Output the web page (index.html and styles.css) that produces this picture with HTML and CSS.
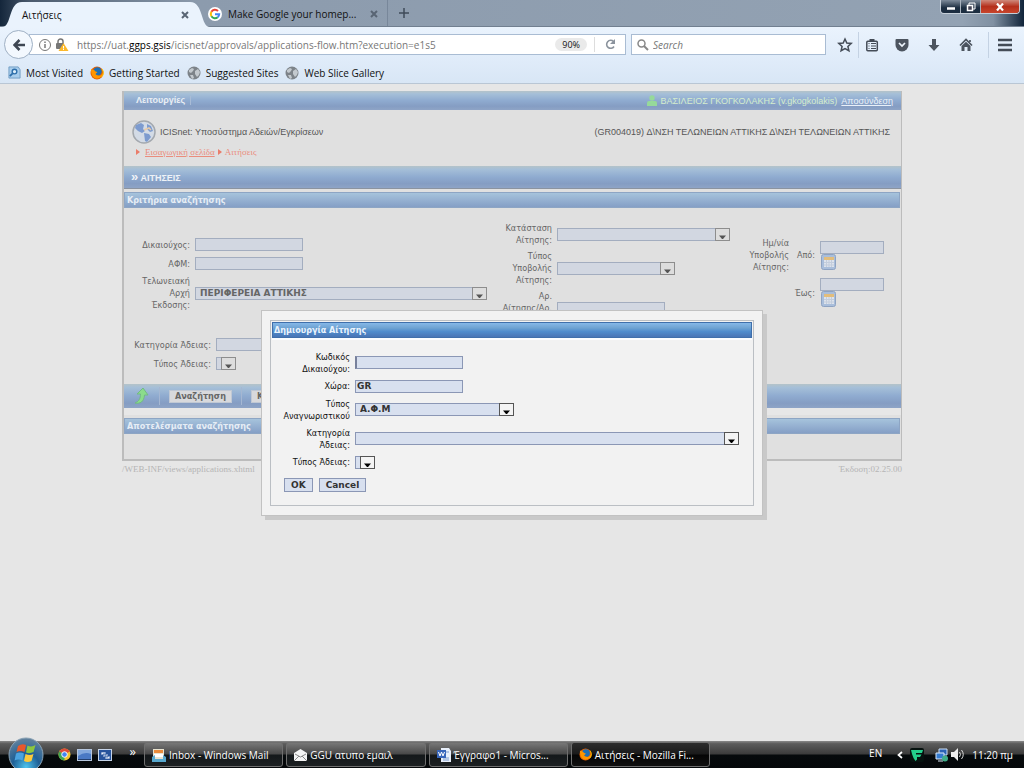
FILE: index.html
```html
<!DOCTYPE html>
<html lang="el">
<head>
<meta charset="utf-8">
<title>Αιτήσεις</title>
<link rel="stylesheet" href="styles.css">
</head>
<body>
<svg class="defs" width="0" height="0" aria-hidden="true">
  <symbol id="close" viewBox="0 0 10 10"><path d="M2 2l6 6M8 2L2 8" stroke="#596574" stroke-width="2"/></symbol>
  <symbol id="firefox" viewBox="0 0 14 14"><circle cx="7" cy="7" r="6.5" fill="#e66000"/><circle cx="7.5" cy="5.5" r="4.2" fill="#1f6fb5"/><path d="M1 3c0 7 3 10 7 9.500 3-.5 5-3 5.300-6C12 9 10 10 8 9.500 5.500 9 5 7.500 6.500 7 8 6.500 7 5.500 5.500 5.500 4.500 4 3.500 3.500 1 3z" fill="#ff9500"/><path d="M12 3c2 3 1.500 6-.5 8" stroke="#ffcb00" fill="none"/></symbol>
  <symbol id="globe" viewBox="0 0 14 14"><circle cx="7" cy="7" r="6.500" fill="#7d8389"/><path d="M2 4l3-2 2 1-1 2-2 2-2-1zM8 5l3-2 2 3-1 3-2 2-2-3zM3 9l3 0 1 3-2 1z" fill="#c3c9ce"/></symbol>
  <symbol id="calendar" viewBox="0 0 15 16"><rect x=".5" y=".5" width="14" height="15" rx="2" fill="#a9bedb" stroke="#8ea3c2"/><rect x="3" y="3" width="10" height="10" fill="#dde3ec"/><path d="M3 4.500h10" stroke="#e2bd7c" stroke-width="3"/><path d="M3 8.500h10M3 11h10M5.500 6v7M8 6v7M10.500 6v7" stroke="#c3cddc"/></symbol>
  <symbol id="arrow" viewBox="0 0 15 13"><rect x=".5" y=".5" width="14" height="12" fill="var(--box)" stroke="var(--edge)"/><path d="M4 7.500h7L8 11H7z" fill="var(--tip)"/></symbol>
</svg>
<header class="browser">
  <div class="tabs">
    <div class="tab tab-on">
      <svg class="curve" width="20" height="26" viewBox="0 0 20 26"><path d="M0 26C10 26 6 1 20 1v25z" fill="#eaf3fd"/></svg>
      <div class="tab-body"><span>Αιτήσεις</span><button class="plain" aria-label="Κλείσιμο"><svg width="10" height="10"><use href="#close"/></svg></button></div>
      <svg class="curve" width="20" height="26" viewBox="0 0 20 26"><path d="M20 26C10 26 14 1 0 1v25z" fill="#eaf3fd"/></svg>
    </div>
    <div class="tab tab-off">
      <svg width="14" height="14" viewBox="0 0 14 14"><circle cx="7" cy="7" r="7" fill="#fff"/><g fill="none" stroke-width="2"><path d="M10 4A4.200 4.200 0 0 0 3.400 4.800" stroke="#ea4335"/><path d="M3.400 4.800a4.200 4.200 0 0 0 0 4.400" stroke="#fbbc05"/><path d="M3.400 9.200A4.200 4.200 0 0 0 9.700 10.200" stroke="#34a853"/><path d="M9.700 10.200A4.200 4.200 0 0 0 11.200 7.200H7" stroke="#4285f4"/></g></svg>
      <span>Make Google your homep...</span><button class="plain" aria-label="Κλείσιμο"><svg width="10" height="10"><use href="#close"/></svg></button>
    </div>
    <button class="plain new-tab" aria-label="Νέα καρτέλα"><svg width="10" height="10" viewBox="0 0 10 10"><path d="M5 0v10M0 5h10" stroke="#3f4b5a" stroke-width="1.500"/></svg></button>
    <div class="win">
      <button aria-label="Ελαχιστοποίηση"><svg width="10" height="8" viewBox="0 0 10 8"><path d="M1 5.500h8" stroke="#fff" stroke-width="2.500"/></svg></button>
      <button aria-label="Επαναφορά"><svg width="10" height="10" viewBox="0 0 10 10"><path d="M3 3V1h6v6H7" fill="none" stroke="#fff"/><path d="M1.500 3.500h5v5h-5z" fill="#445" stroke="#fff" stroke-width="1.500"/></svg></button>
      <button class="win-close" aria-label="Κλείσιμο"><svg width="10" height="8" viewBox="0 0 10 8"><path d="M2 .5l6 7M8 .5l-6 7" stroke="#fff" stroke-width="2.200"/></svg></button>
    </div>
  </div>
  <div class="nav">
    <button class="plain back" aria-label="Πίσω"><svg width="12" height="12" viewBox="0 0 12 12"><path d="M6.500 1L1.500 6l5 5M2 6h10" fill="none" stroke="#3f4753" stroke-width="2.600"/></svg></button>
    <div class="url">
      <svg width="12" height="12" viewBox="0 0 12 12"><circle cx="6" cy="6" r="5.500" fill="none" stroke="#777"/><path d="M6 5v4M6 2.500V4" stroke="#666" stroke-width="1.300"/></svg>
      <svg width="14" height="13" viewBox="0 0 14 13"><path d="M3 6V3.500a2.500 2.500 0 0 1 5 0V6" fill="none" stroke="#777" stroke-width="1.500"/><rect x="1" y="5" width="8" height="6" rx="1" fill="#777"/><path d="M8.500 5l5 8h-10z" fill="#fcb92c"/><path d="M8.500 8v2.500M8.500 11v1" stroke="#fff"/></svg>
      <span class="address">https://uat.<b>ggps.gsis</b>/icisnet/approvals/applications-flow.htm?execution=e1s5</span>
      <span class="zoom">90%</span>
      <button class="plain reload" aria-label="Ανανέωση"><svg width="11" height="11" viewBox="0 0 11 11"><path d="M8.500 2.500A4 4 0 1 0 9 7.500" fill="none" stroke="#8b939d" stroke-width="1.600"/><path d="M10 0v5H5z" fill="#8b939d"/></svg></button>
    </div>
    <label class="search"><svg width="12" height="12" viewBox="0 0 12 12"><circle cx="4.500" cy="4.500" r="3.500" fill="none" stroke="#888" stroke-width="1.500"/><path d="M7 7l4 4" stroke="#888" stroke-width="2"/></svg><input type="text" placeholder="Search" aria-label="Search"></label>
    <div class="tools">
      <button class="plain" aria-label="Σελιδοδείκτης"><svg width="16" height="16" viewBox="0 0 16 16"><path d="M8 2l1.800 4 4.400.4-3.300 3 1 4.300L8 11.500l-3.900 2.200 1-4.300-3.300-3L6.200 6z" fill="none" stroke="#444c57" stroke-width="1.500"/></svg></button>
      <button class="plain ruled" aria-label="Σελιδοδείκτες"><svg width="16" height="16" viewBox="0 0 16 16"><rect x="2.800" y="4.300" width="10.500" height="9.500" rx="1" fill="none" stroke="#444c57" stroke-width="1.500"/><path d="M5.500 4V2h5v2z" fill="#444c57"/><path d="M4.500 6.500h1m1.500 0h5M4.500 9h1M7 9h5m-7.500 2.500h1m1.500 0h5" stroke="#444c57"/></svg></button>
      <button class="plain" aria-label="Pocket"><svg width="16" height="16" viewBox="0 0 16 16"><path d="M1.500 3q0-1 1-1h11q1 0 1 1v5a6.500 6.500 0 0 1-13 0z" fill="#4c545f"/><path d="M5 6l3 3 3-3" fill="none" stroke="#eef5fd" stroke-width="1.700"/></svg></button>
      <button class="plain" aria-label="Λήψεις"><svg width="16" height="16" viewBox="0 0 16 16"><path d="M6 2h4v6h3.500L8 14 2.500 8H6z" fill="#4c545f"/></svg></button>
      <button class="plain" aria-label="Αρχική"><svg width="16" height="16" viewBox="0 0 16 16"><path d="M2 8.500l6-6 6 6M12 5V3" fill="none" stroke="#4c545f" stroke-width="1.700"/><path d="M3.500 9L8 4.700 12.500 9v5H9.500v-4h-3v4h-3z" fill="#4c545f"/></svg></button>
      <button class="plain ruled menu" aria-label="Μενού"><svg width="14" height="14" viewBox="0 0 14 14"><path d="M0 2h14M0 7h14M0 12h14" stroke="#444c57" stroke-width="2.500"/></svg></button>
    </div>
  </div>
  <nav class="bookmarks">
    <a href="#"><svg width="13" height="13" viewBox="0 0 14 14"><path d="M1 1h10l2 3v9H1z" fill="#a8cdec" stroke="#6f9cc3"/><circle cx="7" cy="6" r="2.500" fill="#dceefa" stroke="#2d6eaa" stroke-width="1.500"/><path d="M5 8l-3 3" stroke="#2d6eaa" stroke-width="2"/></svg>Most Visited</a>
    <a href="#"><svg width="14" height="14"><use href="#firefox"/></svg>Getting Started</a>
    <a href="#"><svg width="14" height="14"><use href="#globe"/></svg>Suggested Sites</a>
    <a href="#"><svg width="14" height="14"><use href="#globe"/></svg>Web Slice Gallery</a>
  </nav>
</header>

<main class="view">
  <div class="app">
    <div class="frame">
      <div class="topbar"><span class="ops">Λειτουργίες</span>
        <span class="user"><svg width="10" height="11" viewBox="0 0 10 11"><circle cx="5" cy="3" r="2.700" fill="#96d99a"/><path d="M0 11V8q0-2 2-2h6q2 0 2 2v3z" fill="#96d99a"/></svg>ΒΑΣΙΛΕΙΟΣ ΓΚΟΓΚΟΛΑΚΗΣ (v.gkogkolakis) <a href="#">Αποσύνδεση</a></span></div>
      <div class="head">
        <div class="head-row">
          <svg width="24" height="24" viewBox="0 0 24 24"><circle cx="12" cy="12" r="11" fill="#d3dbe6" stroke="#a3a8ae" stroke-width="1.500"/><path d="M4 5l5-2 3 2-1 4 2 2-3 2-4-2-3-3zM12 13l5 1 2 3-4 5-2-1zM15 4l4 2 2 5-3 1-3-3z" fill="#7d9bcf"/><path d="M12 10l5-2 2 2" stroke="#e6c9a8" stroke-width="1.500" fill="none"/></svg>
          <span>ICISnet: Υποσύστημα Αδειών/Εγκρίσεων</span>
          <span class="office">(GR004019) Δ\ΝΣΗ ΤΕΛΩΝΕΙΩΝ ΑΤΤΙΚΗΣ Δ\ΝΣΗ ΤΕΛΩΝΕΙΩΝ ΑΤΤΙΚΗΣ</span>
        </div>
        <div class="crumbs"><i></i><a href="#">Εισαγωγική σελίδα</a><i></i><span>Αιτήσεις</span></div>
      </div>
      <h1 class="title"><span>»</span> ΑΙΤΗΣΕΙΣ</h1>
      <h2 class="bar">Κριτήρια αναζήτησης</h2>
      <form class="criteria">
        <div class="cols">
          <div class="col col-a">
            <div class="row"><label for="own">Δικαιούχος:</label><input id="own" type="text"></div>
            <div class="row"><label for="afm">ΑΦΜ:</label><input id="afm" type="text"></div>
            <div class="row tall"><label for="auth">Τελωνειακή Αρχή Έκδοσης:</label><span class="pick w-auth"><select id="auth"><option>ΠΕΡΙΦΕΡΕΙΑ ΑΤΤΙΚΗΣ</option></select><svg><use href="#arrow"/></svg></span></div>
          </div>
          <div class="col col-b">
            <div class="row"><label for="st">Κατάσταση Αίτησης:</label><span class="pick w-state"><select id="st"><option></option></select><svg><use href="#arrow"/></svg></span></div>
            <div class="row"><label for="sub">Τύπος Υποβολής Αίτησης:</label><span class="pick w-sub"><select id="sub"><option></option></select><svg><use href="#arrow"/></svg></span></div>
            <div class="row"><label for="num">Αρ.<br>Αίτησης/Αρ.<br>Άδειας:</label><input id="num" type="text"></div>
          </div>
          <div class="col-c">
            <span class="lab">Ημ/νία Υποβολής Αίτησης:</span>
            <label for="from">Από:</label>
            <div class="date"><input id="from" type="text"><button type="button" class="plain" aria-label="Ημερολόγιο από"><svg width="15" height="16"><use href="#calendar"/></svg></button></div>
            <label for="to" class="to">Έως:</label>
            <div class="date"><input id="to" type="text"><button type="button" class="plain" aria-label="Ημερολόγιο έως"><svg width="15" height="16"><use href="#calendar"/></svg></button></div>
          </div>
        </div>
        <div class="licence">
          <div class="row"><label for="cat">Κατηγορία Άδειας:</label><span class="pick w-cat"><select id="cat"><option></option></select><svg><use href="#arrow"/></svg></span></div>
          <div class="row"><label for="typ">Τύπος Άδειας:</label><span class="pick w-type"><select id="typ"><option></option></select><svg><use href="#arrow"/></svg></span></div>
        </div>
      </form>
      <div class="actions">
        <svg width="16" height="18" viewBox="0 0 16 18"><path d="M1 16c5 1 9-1 9.500-8H14L9 1 3 7h3.500c0 4-1 7-5.500 9z" fill="#8bdc8b" stroke="#72b985"/></svg>
        <span class="sep"></span><button>Αναζήτηση</button><span class="sep"></span><button>Καθαρισμός</button>
      </div>
      <div class="results"><h2 class="bar">Αποτελέσματα αναζήτησης</h2></div>
    </div>
    <footer><span>/WEB-INF/views/applications.xhtml</span><span>Έκδοση:02.25.00</span></footer>
  </div>

  <div class="overlay">
    <div class="dialog" role="dialog" aria-labelledby="dlg">
      <form class="inner">
        <h2 class="dlg-title" id="dlg">Δημιουργία Αίτησης</h2>
        <div class="fields">
          <div class="row"><label for="code">Κωδικός Δικαιούχου:</label><span class="focus"><input id="code" type="text"></span></div>
          <div class="row"><label for="country">Χώρα:</label><input id="country" type="text" value="GR"></div>
          <div class="row"><label for="idt">Τύπος Αναγνωριστικού</label><span class="pick w-id"><select id="idt"><option>Α.Φ.Μ</option></select><svg><use href="#arrow"/></svg></span></div>
          <div class="row"><label for="dcat">Κατηγορία Άδειας:</label><span class="pick w-cat"><select id="dcat"><option></option></select><svg><use href="#arrow"/></svg></span></div>
          <div class="row"><label for="dtyp">Τύπος Άδειας:</label><span class="pick w-type"><select id="dtyp"><option></option></select><svg><use href="#arrow"/></svg></span></div>
          <div class="buttons"><button type="button">OK</button><button type="button">Cancel</button></div>
        </div>
      </form>
    </div>
  </div>
</main>

<footer class="taskbar">
  <button class="plain orb" aria-label="Έναρξη"><svg width="36" height="36" viewBox="0 0 36 36"><defs><radialGradient id="g" cx=".5" cy=".85" r=".8"><stop offset="0" stop-color="#4fc4ee"/><stop offset=".5" stop-color="#1f5f95"/><stop offset="1" stop-color="#5e7f9c"/></radialGradient></defs><circle cx="18" cy="18" r="17" fill="url(#g)" stroke="#8ba3b5"/><path d="M10 9q4-3 8-1l-1.500 7q-4-2-8 0z" fill="#e8582b"/><path d="M19.500 8.500q4 2 8-.5l-2 7q-4 2-7.500.5z" fill="#8cc63f"/><path d="M8 16.500q4-2 8 0l-1.500 7q-4-2-8 0z" fill="#4aa3e0"/><path d="M17.500 17q4 2 8 0l-2 7q-4 2-7.500 0z" fill="#fdc93a"/></svg></button>
  <div class="quick">
    <svg width="13" height="13" viewBox="0 0 14 14"><circle cx="7" cy="7" r="6.500" fill="#f1c232"/><path d="M7 7L1.400 3.800A6.500 6.500 0 0 1 12.600 3.800z" fill="#dd4b39"/><path d="M7 7L1.400 3.800A6.500 6.500 0 0 0 7 13.500z" fill="#3fa653"/><circle cx="7" cy="7" r="3" fill="#4285f4" stroke="#fff"/></svg>
    <svg width="15" height="12" viewBox="0 0 15 12"><rect x=".5" y=".5" width="14" height="11" fill="#4a79c4" stroke="#b6c6dd"/><path d="M1 7q7-5 13-2V1H1z" fill="#83a8dc"/><path d="M1 10.500h13" stroke="#24406f"/></svg>
    <svg width="14" height="12" viewBox="0 0 14 12"><rect x=".5" y=".5" width="13" height="11" fill="#27549c" stroke="#c6d4e8"/><path d="M3 3h5v3H3zM5 5h5v3H5zM7 7h5v3H7z" fill="#e8effa" stroke="#27549c" stroke-width=".7"/></svg>
    <span class="more">»</span>
  </div>
  <div class="tasks">
    <button><svg width="14" height="14" viewBox="0 0 14 14"><rect x="1" y="1" width="11" height="12" fill="#e9e3cf"/><path d="M2 2h9v3H2z" fill="#e98b3c"/><path d="M2 6h9v3H2z" fill="#fff"/><path d="M0 9l3-2v4h8V7l3 2v5H0z" fill="#58a9cf"/></svg><span>Inbox - Windows Mail</span></button>
    <button><svg width="13" height="12" viewBox="0 0 13 12"><path d="M0 4l6.500-4L13 4v8H0z" fill="#f4f4f4"/><path d="M1 5l5.500 3L12 5M0 12l5-5M13 12L8 7" fill="none" stroke="#888"/></svg><span>GGU ατυπο εμαιλ</span></button>
    <button><svg width="14" height="14" viewBox="0 0 14 14"><path d="M4 0h8l2 3v11H4z" fill="#e8effa"/><path d="M6 4h6M6 10h6M6 12h6" stroke="#7d9ccd"/><rect y="2" width="9" height="8" fill="#3765ba"/><path d="M1.500 4l1.500 4 1.500-4L6 8l1.500-4" fill="none" stroke="#fff"/></svg><span>Έγγραφο1 - Micros...</span></button>
    <button class="on"><svg width="13" height="13"><use href="#firefox"/></svg><span>Αιτήσεις - Mozilla Fi...</span></button>
  </div>
  <div class="tray"><span class="lang">EN</span>
    <svg width="6" height="8" viewBox="0 0 6 8"><path d="M5 1L1.500 4 5 7" fill="none" stroke="#fff" stroke-width="1.700"/></svg>
    <svg width="14" height="14" viewBox="0 0 14 14"><rect width="14" height="14" rx="2" fill="#06120f"/><path d="M1 2h12l-1 3H6v1.500h5.500L10 9H7v2.500L5.500 13 3.500 10 2 6z" fill="#24cf8c"/></svg>
    <svg class="net" width="13" height="14" viewBox="0 0 13 14"><path d="M4 1h8v6H4z" fill="#2b62b4" stroke="#cfe0f5"/><path d="M1 5h8v6H1zM3 13h5" fill="#347bd0" stroke="#dce9f8"/><circle cx="10" cy="10.500" r="3" fill="#3fae8a"/></svg>
    <svg width="14" height="13" viewBox="0 0 14 13"><path d="M0 4h3l4-4v13L3 9H0z" fill="#eee"/><path d="M8.500 4q2 2.500 0 5M10.500 2q3.500 4.500 0 9" fill="none" stroke="#ddd"/></svg>
    <time>11:20 πμ</time></div>
</footer>
</body>
</html>
```
FILE: styles.css
```css
* { box-sizing: border-box; }
body { margin: 0; height: 100vh; display: flex; flex-direction: column; overflow: hidden; background: #e6e6e6; font: 10px/14px "Open Sans", "Noto Sans", sans-serif; color: #111; }
.defs { position: absolute; }
svg { display: block; flex: none; }
button, input, select { font: inherit; color: inherit; margin: 0; padding: 0; }
.plain { border: 0; background: none; display: flex; align-items: center; justify-content: center; }
h1, h2 { margin: 0; }

/* Browser chrome */
.tabs { display: flex; height: 27px; background: linear-gradient(90deg, #14263b, #4b5b6e 30px, #8c9bad 200px, #93a2b3 94%, #8090a2 97%, #10243a); border-bottom: 1px solid #717f90; }
.tab { display: flex; align-items: center; }
.tab-on { margin-left: 2px; height: 27px; }
.tab-body { width: 168px; height: 25px; align-self: flex-end; background: #eaf3fd; display: flex; align-items: center; justify-content: space-between; padding: 0; }
.tab-body > * { z-index: 1; }
.curve { align-self: flex-end; height: 26px; }
.tab-off { gap: 6px; width: 180px; height: 26px; padding: 2px 8px 0 0; margin-left: -2px; border-right: 1px solid #78879a; }
.tab-off span { flex: 1; white-space: nowrap; }
.new-tab { width: 32px; }
.win { margin-left: auto; margin-right: 4px; display: flex; height: 14px; border: 1px solid #c5ced8; border-top: 0; border-radius: 0 0 4px 4px; overflow: hidden; }
.win button { width: 20px; border: 0; border-right: 1px solid #a9b3be; background: linear-gradient(#7f8c9b, #1c2d40 60%); display: flex; align-items: center; justify-content: center; }
.win .win-close { width: 38px; border-right: 0; background: linear-gradient(#cf8a7c, #b5301c 50%, #c8452c); }
.nav { height: 35px; display: flex; align-items: center; padding: 0 4px; background: linear-gradient(#eaf3fd, #dfebf9); }
.back { width: 29px; height: 29px; border: 1px solid #9fb0c4; border-radius: 50%; background: #f3f8fe; z-index: 1; }
.url { flex: 1; height: 21px; margin-left: -4px; padding-left: 9px; display: flex; align-items: center; gap: 4px; background: #fff; border: 1px solid #a9bcd3; }
.address { flex: 1; margin-left: 4px; color: #777; white-space: nowrap; }
.address b { font-weight: 400; color: #000; }
.zoom { padding: 0 7px; border-radius: 7px; background: #eaeaea; font-size: 9px; line-height: 13px; }
.reload { width: 31px; height: 15px; border-left: 1px solid #ddd; margin-left: 3px; }
.search { width: 195px; height: 21px; margin-left: 5px; padding-left: 5px; display: flex; align-items: center; gap: 4px; background: #fff; border: 1px solid #a9bcd3; }
.search input { flex: 1; min-width: 0; border: 0; outline: 0; background: none; }
.search input::placeholder { color: #777; font-style: italic; opacity: 1; }
.tools { display: flex; margin-left: 6px; }
.tools button { width: 32px; height: 26px; }
.tools button:first-child { width: 26px; }
.tools .ruled { border-left: 1px solid #c4d2e3; width: 26px; margin-right: 2px; }
.tools .menu { width: 32px; margin: 0 0 0 6px; }
.bookmarks { height: 22px; display: flex; align-items: center; gap: 7px; padding: 0 8px; background: linear-gradient(#dfebf9, #d8e6f5); border-bottom: 1px solid #b9c6d4; }
.bookmarks a { display: flex; align-items: center; gap: 5px; color: #111; text-decoration: none; }

/* Application page */
.view { flex: 1; min-height: 0; position: relative; padding-top: 7px; font: 9px/12px "DejaVu Sans Condensed", "DejaVu Sans", sans-serif; color: #666; }
.app { max-width: 780px; margin: 0 auto; }
.frame { background: #e0e0e0; border: solid #bcbcbc; border-width: 0 1px 2px 2px; }
.topbar, .title, .actions { background: linear-gradient(#b4c3c9, #a5bfd8 15%, #8fabd0 50%, #859dc3 80%, #8ea4c6); }
.topbar { height: 19px; display: flex; align-items: center; justify-content: space-between; padding: 0 8px 0 12px; font: 9px/12px "Liberation Sans", sans-serif; color: #dceadb; }
.ops { font-weight: 700; color: #e9eef4; padding-right: 5px; border-right: 1px solid #a9bcd6; line-height: 9px; }
.user { display: flex; align-items: center; gap: 4px; color: #d5edcd; }
.user a { color: #e9f0f8; }
.head { height: 56px; padding: 10px 11px 0 8px; font: 9px/12px "Liberation Sans", sans-serif; }
.head-row { display: flex; align-items: center; gap: 4px; color: #555; }
.office { margin-left: auto; }
.crumbs { display: flex; align-items: center; gap: 3px; padding-left: 4px; margin-top: 2px; font: 9px/12px "Liberation Serif", serif; color: #ea8d7d; }
.crumbs a { color: inherit; }
.crumbs i { border: solid transparent; border-width: 3px 0 3px 4px; border-left-color: #ea7d6a; }
.crumbs i:first-child { margin-right: 2px; }
.title { height: 23px; padding-left: 7px; font: 700 9px/24px "Liberation Sans", sans-serif; color: #eef2f7; border-bottom: 1px solid #8b93a0; }
.title span { font-size: 13px; line-height: 20px; }
.bar { height: 16px; margin: 3px 1px 0 0; padding-left: 2px; border: 1px solid #8da5c4; background: linear-gradient(#a6c3dc, #859fc6); font: 700 9px/14px "DejaVu Sans Condensed", "DejaVu Sans", sans-serif; color: #e6edf5; }
.criteria { padding: 14px 0 11px; }
.cols { display: grid; grid-template-columns: 374px 240px 1fr; align-items: start; }
.row { display: flex; align-items: center; gap: 5px; min-height: 13px; }
.row label { flex: none; text-align: right; }
.col { display: grid; }
.col-a { padding-top: 13px; }
.col-a .row { min-height: 19px; }
.col-a .tall { margin-top: 2px; }
.col-a label { width: 66px; padding-left: 14px; }
.col-b { gap: 4px; }
.col-b label { width: 54px; }
.col-c { display: grid; grid-template-columns: 51px 21px 64px; column-gap: 5px; row-gap: 5px; align-items: center; text-align: right; padding-top: 15px; }
.to { grid-column: 2; }
.date button { margin: 0 0 0 1px; }
.licence { margin-top: 9px; }
.licence .row { min-height: 19px; }
.licence label { width: 87px; }
input[type=text] { display: block; height: 13px; }
.view input { width: 108px; padding: 0 1px; border: 1px solid #a3adbf; border-radius: 0; outline: 0; background: #d2d7e1; font: 700 9px/11px "DejaVu Sans", sans-serif; }
.view .date input { width: 64px; }
.pick { --box: #ddd; --edge: #8d8d8d; --tip: #555; display: grid; height: 13px; }
.pick > * { grid-area: 1 / 1; min-width: 0; }
.pick svg { justify-self: end; width: 15px; height: 13px; pointer-events: none; }
.pick select { appearance: none; width: 100%; height: 13px; padding: 0 16px 0 4px; border: 1px solid #a3adbf; border-radius: 0; background: #d2d7e1; font: 700 9px/11px "DejaVu Sans", sans-serif; }
.pick.w-type select { padding: 0; }
.w-auth { width: 292px; }
.w-state { width: 173px; }
.w-sub { width: 118px; }
.w-cat { width: 384px; }
.w-type { width: 20px; }
.w-id { width: 159px; }
.actions { height: 24px; display: flex; align-items: center; gap: 9px; padding-left: 10px; }
.actions .sep { width: 1px; height: 18px; background: #a5b7d2; }
.actions button { height: 13px; padding: 0 5px; border: 1px solid #c0c8d4; background: #d8d9dc; font: 700 9px/10px "DejaVu Sans Condensed", "DejaVu Sans", sans-serif; }
.results { border-top: 7px solid #e7e7e7; padding-bottom: 25px; }
.app footer { display: flex; justify-content: space-between; padding-top: 2px; font: 9px/12px "Liberation Serif", serif; color: #b5b5b5; }

/* Dialog */
.overlay { position: absolute; inset: 0; display: flex; align-items: center; justify-content: center; color: #111; }
.dialog { width: 502px; padding: 9px 8px; background: #f2f2f2; border: 1px solid #c2c2c2; box-shadow: 4px 4px 0 #c9c9c9; }
.inner { border: 1px solid #bbbfc4; padding: 1px 1px 13px; }
.dlg-title { height: 16px; padding-left: 1px; border: 1px solid #3f6fab; background: linear-gradient(#85b8e8, #6fa3d2 35%, #4f8ccd 60%, #4874b5); color: #eaf3fc; font: 700 9px/14px "DejaVu Sans Condensed", "DejaVu Sans", sans-serif; }
.fields { display: grid; gap: 5px; padding: 11px 12px 0; border-top: 2px solid #fafcff; }
.fields label { width: 66px; display: flex; justify-content: flex-end; }
.fields input, .fields select { background: #d8e0ef; border-color: #8b97b5; color: #333; }
.fields .pick { --box: #f4f4f4; --edge: #555; --tip: #000; }
.focus input { border-left: 2px solid #77809b; }
.buttons { display: flex; gap: 6px; padding-top: 4px; }
.buttons button { height: 14px; padding: 0 6px; border: 1px solid #8b97b5; background: #d8e0ef; color: #333; font: 700 9px/10px "DejaVu Sans", sans-serif; }

/* Taskbar */
.taskbar { height: 27px; display: flex; align-items: center; background: linear-gradient(#8a8a8a, #5c5c5c 10%, #3c3c3c 48%, #060a0c 52%, #05080a); color: #fff; position: relative; padding-left: 8px; }
.orb { width: 36px; height: 27px; }
.orb svg { position: relative; z-index: 1; }
.quick { display: flex; align-items: center; gap: 6px; margin-left: 14px; width: 86px; }
.quick .more { margin-left: auto; padding: 0 8px 8px 0; font-size: 13px; }
.tasks { display: flex; flex: 1; gap: 3px; max-width: 566px; }
.tasks button { flex: 1; min-width: 0; height: 25px; display: flex; align-items: center; gap: 3px; padding: 0 7px; border: 1px solid #6f6f6f; border-radius: 3px; background: linear-gradient(#777, #484848 48%, #14181a 52%, #1c2022); white-space: nowrap; }
.tasks .on { background: linear-gradient(#2d2d2d, #1a1a1a 48%, #050505 52%, #101010); }
.tray { margin-left: auto; display: flex; align-items: center; gap: 7px; padding-right: 11px; }
.lang { margin-right: 8px; padding-bottom: 3px; }
.net { margin-left: 4px; }
.tray svg:nth-last-child(2) { margin-left: -4px; }
```
